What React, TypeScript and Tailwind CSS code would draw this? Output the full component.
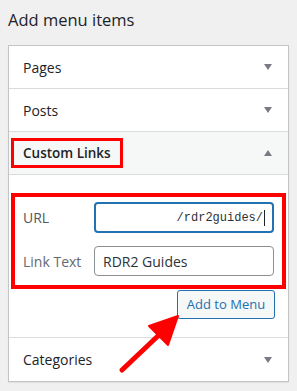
function Caret({ up = false }: { up?: boolean }) {
  return (
    <svg width="8" height="6" viewBox="0 0 8 6" className="shrink-0">
      {up ? <path d="M0 6 L4 0 L8 6 Z" fill="#787c82" /> : <path d="M0 0 L8 0 L4 6 Z" fill="#787c82" />}
    </svg>
  );
}

function Row({ label, last = false }: { label: string; last?: boolean }) {
  return (
    <div
      className={`flex h-[43px] items-center justify-between pl-[14px] pr-[16px] text-[14px] text-[#1d2327] ${
        last ? '' : 'border-b border-[#dcdcde]'
      }`}
    >
      <span>{label}</span>
      <Caret />
    </div>
  );
}

export default function App() {
  return (
    <div className="relative h-[391px] w-[297px] overflow-hidden bg-[#f0f0f1] font-['Open_Sans',sans-serif]">
      <h2 className="h-[45px] pl-[8px] pt-[8px] text-[16.5px] leading-[24px] text-[#1d2327]">Add menu items</h2>

      <div className="ml-[8px] w-[281px] border border-[#c3c4c7] bg-white shadow-[0_1px_1px_rgba(0,0,0,0.06)]">
        <Row label="Pages" />
        <Row label="Posts" />

        <div className="flex h-[43px] items-center justify-between border-b border-[#dcdcde] bg-[#f6f7f7] pl-[2px] pr-[16px]">
          <div className="flex h-[30px] w-[112px] items-center whitespace-nowrap border-[3px] border-[#ff0000] px-[9px] text-[13.5px] font-semibold text-[#1d2327]">
            Custom Links
          </div>
          <Caret up />
        </div>

        <div className="pt-[18px]">
          <div className="mx-[2px] flex h-[96px] flex-col gap-[13px] border-4 border-[#ff0000] px-[8px] pt-[5px]">
            <div className="flex items-center justify-between">
              <span className="text-[14px] text-[#50575e]">URL</span>
              <div className="flex h-[31px] w-[180px] items-center justify-end rounded-[4px] border-2 border-[#2271b1] pr-[7px] font-['Liberation_Mono',monospace] text-[12px] text-[#2c3338]">
                /rdr2guides/
                <span className="ml-[1px] inline-block h-[16px] w-px bg-[#1d2327]" />
              </div>
            </div>
            <div className="flex items-center justify-between">
              <span className="text-[14px] text-[#646970]">Link Text</span>
              <div className="flex h-[30px] w-[180px] items-center rounded-[4px] border border-[#8c8f94] pl-[8px] text-[14px] text-[#2c3338]">
                RDR2 Guides
              </div>
            </div>
          </div>

          <div className="flex justify-end pb-[18px] pr-[13px] pt-[1px]">
            <div className="flex h-[29px] w-[98px] items-center justify-center rounded-[3px] border border-[#2271b1] bg-[#f6f7f7] text-[13px] text-[#2271b1]">
              Add to Menu
            </div>
          </div>

          <div className="border-t border-[#dcdcde]">
            <Row label="Categories" last />
          </div>
        </div>
      </div>

      <svg className="pointer-events-none absolute left-0 top-0" width="297" height="391" viewBox="0 0 297 391">
        <line x1="122" y1="370" x2="160" y2="334" stroke="#ff0000" strokeWidth="5" strokeLinecap="round" />
        <path d="M178 316 L149 326 L168 345 Z" fill="#ff0000" stroke="#ff0000" strokeWidth="2" strokeLinejoin="round" />
      </svg>
    </div>
  );
}
